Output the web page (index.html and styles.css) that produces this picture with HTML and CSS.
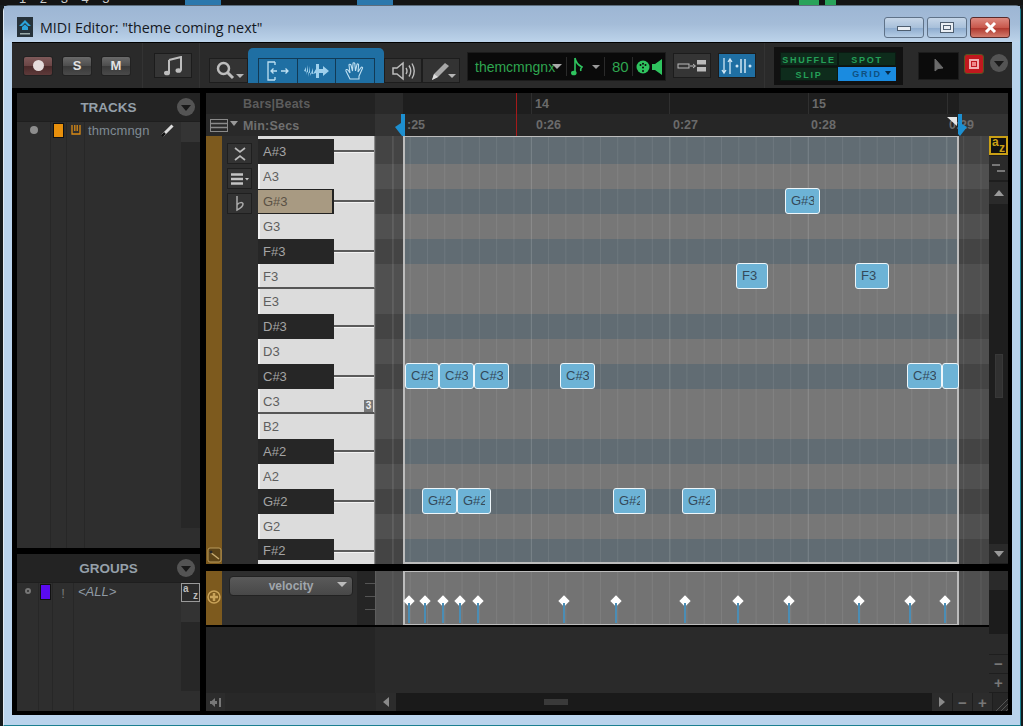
FILE: index.html
```html
<!DOCTYPE html>
<html lang="en">
<head>
  <meta charset="UTF-8">
  <title>MIDI Editor</title>
  <link rel="stylesheet" href="styles.css">
</head>
<body>
  <div class="behind">
    <span class="behind-nums">1 2 3 4 5</span>
    <i class="bl b1"></i><i class="bl b2"></i><i class="gr g1"></i><i class="gr g2"></i>
  </div>

  <div class="window">
    <div class="titlebar">
      <svg class="app-icon" width="16" height="20" viewBox="0 0 16 20"><rect width="16" height="20" fill="#26323a"/><path d="M8 3 14 9 11 9 8 6 5 9 2 9Z" fill="#2aa3dc"/><path d="M5 10 8 7.500 11 10 11 13 5 13Z" fill="#2aa3dc"/><rect x="3" y="16" width="10" height="1.500" fill="#9aa"/></svg>
      <span class="title">MIDI Editor: "theme coming next"</span>
      <div class="win-btns">
        <div class="win-btn"><i class="ic-min"></i></div>
        <div class="win-btn"><i class="ic-max"></i></div>
        <div class="win-btn close"><svg width="13" height="11" viewBox="0 0 13 11"><path d="M2 1 11 10M11 1 2 10" stroke="#fff" stroke-width="3"/></svg></div>
      </div>
    </div>

    <div class="client">
      <div class="toolbar">
        <div class="tb-sec sec-rec">
          <div class="tb-chip rec"><i></i></div>
          <div class="tb-chip">S</div>
          <div class="tb-chip">M</div>
        </div>
        <div class="tb-sec sec-note">
          <div class="tb-btn big">
            <svg width="20" height="20" viewBox="0 0 20 20"><path d="M6 4 18 1V14.500M6 4V17" stroke="#bdbdbd" stroke-width="2" fill="none"/><ellipse cx="4" cy="17" rx="3" ry="2.300" fill="#bdbdbd"/><ellipse cx="15.500" cy="14.500" rx="3" ry="2.300" fill="#bdbdbd"/></svg>
          </div>
        </div>
        <div class="tb-sec sec-tools">
          <div class="tool-btn">
            <svg width="22" height="20" viewBox="0 0 22 20"><circle cx="7.500" cy="7.500" r="5.500" stroke="#bdbdbd" stroke-width="2.500" fill="none"/><path d="M11.500 11.500 17 17" stroke="#bdbdbd" stroke-width="3"/></svg>
            <i class="mini-arrow"></i>
          </div>
          <div class="blue-tab">
            <div class="blue-cell">
              <svg width="24" height="20" viewBox="0 0 24 20"><path d="M9 1H2V19H9M9 1V4M9 16V19" stroke="#bfe0f2" stroke-width="1.300" fill="none"/><path d="M11 10H5M7.500 7.500 5 10 7.500 12.500M15 10H22M19.500 7.500 22 10 19.500 12.500" stroke="#bfe0f2" stroke-width="1.300" fill="none"/></svg>
            </div>
            <div class="blue-cell">
              <svg width="28" height="20" viewBox="0 0 28 20"><path d="M1 10 3 6V14L5 4V16L7 5V15L10 7 10 13 13 8V3H16V8L20 8V5L26 10 20 15V12L16 12V17H13V12L10 13Z" fill="#9fd0ec"/></svg>
            </div>
            <div class="blue-cell">
              <svg width="22" height="20" viewBox="0 0 22 20"><path d="M6 18 2 10C1.500 8.500 3 8 4 9L6 12 5 4C5 3 6.500 3 7 4L8.500 10 9 2.500C9 1.500 10.500 1.500 10.800 2.500L11.500 10 13 3.500C13.300 2.500 14.800 2.800 14.600 4L14 11 17 6.500C17.600 5.600 19 6.300 18.500 7.300L15 15 15 18Z" stroke="#bfe0f2" stroke-width="1.100" fill="none"/></svg>
            </div>
          </div>
          <div class="tool-btn narrow">
            <svg width="24" height="20" viewBox="0 0 24 20"><path d="M1 7H5L11 2V18L5 13H1Z" stroke="#bdbdbd" stroke-width="1.500" fill="none"/><path d="M14 7Q16 10 14 13M17 4.500Q20.500 10 17 15.500M20 2.500Q24.500 10 20 17.500" stroke="#bdbdbd" stroke-width="1.400" fill="none"/></svg>
          </div>
          <div class="tool-btn narrow">
            <svg width="22" height="20" viewBox="0 0 22 20"><path d="M2 19 4 13 15 2 19 5 8 16Z" fill="#a8a8a8"/><path d="M2 19 4 13 8 16Z" fill="#ddd"/></svg>
            <i class="mini-arrow"></i>
          </div>
          <div class="name-panel">
            <span class="nm">themcmngnx</span><i class="wh-arrow"></i>
            <i class="sep"></i>
            <svg class="nt" width="12" height="20" viewBox="0 0 12 20"><path d="M4 1V15M4 1Q5 7 11 10 9 12 10 14" stroke="#2fc45f" stroke-width="1.600" fill="none"/><ellipse cx="2.800" cy="16" rx="2.800" ry="2.300" fill="#2fc45f"/></svg>
            <i class="gy-arrow"></i>
            <i class="sep"></i>
            <span class="vel">80</span>
            <i class="sep tight"></i>
            <svg class="dial" width="14" height="14" viewBox="0 0 14 14"><circle cx="7" cy="7" r="6.500" fill="#2fc45f"/><circle cx="4.500" cy="5" r="1" fill="#0a0a0a"/><circle cx="9.500" cy="5" r="1" fill="#0a0a0a"/><circle cx="7" cy="3.800" r="1" fill="#0a0a0a"/><circle cx="7" cy="7.500" r="1" fill="#0a0a0a"/><circle cx="7" cy="11" r="1" fill="#0a0a0a"/></svg>
            <svg class="spk" width="11" height="16" viewBox="0 0 11 16"><path d="M0 5H3L10 0V16L3 11H0Z" fill="#2fc45f"/></svg>
          </div>
          <div class="tb-btn wide">
            <svg width="30" height="14" viewBox="0 0 30 14"><rect x="1" y="5" width="11" height="4" fill="none" stroke="#bbb"/><path d="M13 7H18M16 5 18.500 7 16 9" stroke="#bbb" fill="none"/><rect x="20" y="1" width="9" height="4.500" fill="#bbb"/><rect x="20" y="8" width="9" height="4.500" fill="#bbb"/></svg>
          </div>
          <div class="tb-btn wide active">
            <svg width="32" height="18" viewBox="0 0 32 18"><path d="M3 1V16M1 13 3 16 5 13M9 17V2M7 5 9 2 11 5" stroke="#cfe6f4" stroke-width="1.300" fill="none"/><circle cx="16" cy="9" r="1.500" fill="#cfe6f4"/><path d="M20 2V16M24 2V16" stroke="#cfe6f4" stroke-width="1.500"/><circle cx="29" cy="9" r="1.500" fill="#cfe6f4"/></svg>
          </div>
        </div>
        <div class="tb-sec sec-mode">
          <div class="mode-grid">
            <div class="mode">SHUFFLE</div>
            <div class="mode">SPOT</div>
            <div class="mode">SLIP</div>
            <div class="mode on">GRID<i class="grid-arrow"></i></div>
          </div>
          <div class="cursor-box">
            <svg width="10" height="16" viewBox="0 0 10 16"><path d="M1 1V13L4 10.500 9 10Z" fill="#6a6a6a" stroke="#6a6a6a"/></svg>
          </div>
          <div class="red-btn"><i></i></div>
          <div class="circle-drop"><i></i></div>
        </div>
      </div>

      <div class="work">
        <div class="side">
          <div class="panel tracks">
            <div class="panel-head"><span>TRACKS</span><div class="circle-drop"><i></i></div></div>
            <div class="panel-body">
              <div class="pcol c-dot"><i class="dot"></i></div>
              <div class="pcol c-clr"><i class="clr"></i></div>
              <div class="pcol c-typ">
                <svg width="10" height="10" viewBox="0 0 10 10"><path d="M1 0V9H9V0M3.800 0V6M6.200 0V6" stroke="#d98a16" stroke-width="1.300" fill="none"/></svg>
              </div>
              <div class="pcol c-name">
                <span>thmcmngn</span>
                <svg width="14" height="14" viewBox="0 0 14 14"><path d="M1.500 12.500 11.500 2.500" stroke="#ddd" stroke-width="3"/><path d="M1 13 4 10" stroke="#111" stroke-width="2.500"/></svg>
              </div>
              <div class="pscroll"><i class="ps-top"></i><i class="ps-fill"></i><i class="ps-end"></i></div>
            </div>
          </div>
          <div class="panel groups">
            <div class="panel-head"><span>GROUPS</span><div class="circle-drop"><i></i></div></div>
            <div class="panel-body">
              <div class="pcol c-dot"><i class="ring"></i></div>
              <div class="pcol c-clr"><i class="clr purple"></i></div>
              <div class="pcol c-typ bang">!</div>
              <div class="pcol c-name all"><em>&lt;ALL&gt;</em></div>
              <div class="pscroll">
                <div class="az"><b>a</b><b>z</b></div>
                <i class="ps-top short"></i><i class="ps-fill"></i><i class="ps-end"></i>
              </div>
            </div>
          </div>
        </div>

        <div class="main">
          <div class="ruler">
            <div class="ruler-labels">
              <div class="rl-top">Bars|Beats</div>
              <div class="rl-bot">
                <svg width="18" height="13" viewBox="0 0 18 13"><rect x=".5" y=".5" width="17" height="12" fill="none" stroke="#8a8a8a"/><path d="M1 4.500H17M1 8.500H17" stroke="#8a8a8a" stroke-width="1.500"/></svg>
                <i class="rl-arrow"></i>
                <span>Min:Secs</span>
              </div>
            </div>
            <div class="timeline">
              <div class="tl-top"></div>
              <div class="tl-bot"></div>
              <i class="bar-tick" style="left:156px"></i>
              <i class="bar-tick" style="left:294px"></i>
              <i class="bar-tick" style="left:433px"></i>
              <i class="bar-tick" style="left:572px"></i>
              <span class="bar-num" style="left:160px">14</span>
              <span class="bar-num" style="left:437px">15</span>
              <span class="sec" style="left:32px">:25</span>
              <span class="sec" style="left:161px">0:26</span>
              <span class="sec" style="left:298px">0:27</span>
              <span class="sec" style="left:436px">0:28</span>
              <span class="sec" style="left:574px">0:29</span>
              <i class="play-line"></i>
              <svg class="flag flag-l" width="10" height="22" viewBox="0 0 10 22"><path d="M6 0H10V22H7L0 13 6 9Z" fill="#1d8fd0"/></svg>
              <svg class="flag flag-w" width="10" height="9" viewBox="0 0 10 9"><path d="M0 0H10V9Z" fill="#e6e6e6"/></svg>
              <svg class="flag flag-r" width="11" height="22" viewBox="0 0 11 22"><path d="M0 0H4V10L9 13 2 22 0 20Z" fill="#1d8fd0"/></svg>
            </div>
          </div>

          <div class="roll">
            <div class="rail">
              <svg class="rail-ic" width="15" height="16" viewBox="0 0 15 16"><rect x="1" y="1" width="13" height="14" rx="2" fill="#5d4417" stroke="#b99a5c"/><path d="M3 5 12 12" stroke="#c9ad72" stroke-width="1.500"/><circle cx="4" cy="5" r="1.500" fill="#2a2a2a"/></svg>
            </div>
            <div class="roll-tools">
              <div class="rt-btn"><svg width="14" height="14" viewBox="0 0 14 14"><path d="M2 1 7 5 12 1M2 13 7 9 12 13" stroke="#bbb" stroke-width="1.700" fill="none"/></svg></div>
              <div class="rt-btn"><svg width="18" height="12" viewBox="0 0 18 12"><path d="M0 1.500H12M0 6H12M0 10.500H12" stroke="#c4c4c4" stroke-width="2.500"/><path d="M14 5H18L16 7.500Z" fill="#c4c4c4"/></svg></div>
              <div class="rt-btn"><svg width="10" height="16" viewBox="0 0 10 16"><path d="M2 0V14C6 12 8 10 8 8 8 6 4 6 2 9" stroke="#aaa" stroke-width="1.500" fill="none"/></svg></div>
            </div>
            <div class="keys">
              <div class="key-top"></div>
              <div class="key sharp"><span class="blk">A#3</span></div>
              <div class="key">A3</div>
              <div class="key sharp"><span class="blk sel">G#3</span></div>
              <div class="key">G3</div>
              <div class="key sharp"><span class="blk">F#3</span></div>
              <div class="key seam">F3</div>
              <div class="key">E3</div>
              <div class="key sharp"><span class="blk">D#3</span></div>
              <div class="key">D3</div>
              <div class="key sharp"><span class="blk">C#3</span></div>
              <div class="key seam">C3<b class="oct">3</b></div>
              <div class="key">B2</div>
              <div class="key sharp"><span class="blk">A#2</span></div>
              <div class="key">A2</div>
              <div class="key sharp"><span class="blk">G#2</span></div>
              <div class="key">G2</div>
              <div class="key sharp"><span class="blk short">F#2</span></div>
            </div>
            <div class="lanes">
              <div class="row blue top-sliver"></div>
              <div class="row blue"></div>
              <div class="row"></div>
              <div class="row blue"><div class="note" style="left:410px;width:35px"><span>G#3</span></div></div>
              <div class="row"></div>
              <div class="row blue"></div>
              <div class="row">
                <div class="note" style="left:361px;width:32px"><span>F3</span></div>
                <div class="note" style="left:480px;width:34px"><span>F3</span></div>
              </div>
              <div class="row"></div>
              <div class="row blue"></div>
              <div class="row"></div>
              <div class="row blue">
                <div class="note" style="left:30px;width:34px"><span>C#3</span></div>
                <div class="note" style="left:64px;width:35px"><span>C#3</span></div>
                <div class="note" style="left:99px;width:35px"><span>C#3</span></div>
                <div class="note" style="left:185px;width:35px"><span>C#3</span></div>
                <div class="note" style="left:532px;width:35px"><span>C#3</span></div>
                <div class="note" style="left:567px;width:17px"></div>
              </div>
              <div class="row"></div>
              <div class="row"></div>
              <div class="row blue"></div>
              <div class="row"></div>
              <div class="row blue">
                <div class="note" style="left:47px;width:35px"><span>G#2</span></div>
                <div class="note" style="left:82px;width:34px"><span>G#2</span></div>
                <div class="note" style="left:238px;width:33px"><span>G#2</span></div>
                <div class="note" style="left:307px;width:34px"><span>G#2</span></div>
              </div>
              <div class="row"></div>
              <div class="row blue"></div>
            </div>
            <div class="vscroll">
              <div class="az yellow"><b>a</b><b>z</b></div>
              <div class="vs-btn lines"><i></i><i></i></div>
              <div class="vs-btn"><i class="up"></i></div>
              <div class="vs-track"><i class="thumb"></i></div>
              <div class="vs-btn end"><i class="down"></i></div>
            </div>
          </div>

          <div class="lower">
            <div class="lower-main">
              <div class="lane-row">
                <div class="rail">
                  <svg class="rail-plus" width="14" height="14" viewBox="0 0 14 14"><circle cx="7" cy="7" r="6" fill="none" stroke="#c9a35a" stroke-width="1.500"/><path d="M7 3V11M3 7H11" stroke="#c9a35a" stroke-width="2.500"/></svg>
                </div>
                <div class="lane-ctl">
                  <div class="drop">velocity<i class="wh-arrow"></i></div>
                </div>
                <div class="lane-scale"><i></i><i></i><i></i></div>
                <div class="lane">
                  <div class="pin" style="left:34px"></div>
                  <div class="pin" style="left:50px"></div>
                  <div class="pin" style="left:68px"></div>
                  <div class="pin" style="left:85px"></div>
                  <div class="pin" style="left:103px"></div>
                  <div class="pin" style="left:189px"></div>
                  <div class="pin" style="left:241px"></div>
                  <div class="pin" style="left:310px"></div>
                  <div class="pin" style="left:363px"></div>
                  <div class="pin" style="left:414px"></div>
                  <div class="pin" style="left:484px"></div>
                  <div class="pin" style="left:535px"></div>
                  <div class="pin" style="left:570px"></div>
                </div>
              </div>
              <div class="empty"><div class="empty-l"></div><div class="empty-r"></div></div>
            </div>
            <div class="lower-scroll">
              <i class="ls-a"></i><i class="ls-b"></i><i class="ls-c"></i>
              <div class="sq">&minus;</div>
              <div class="sq">+</div>
            </div>
          </div>

          <div class="hscroll">
            <div class="hs-btn first"><svg width="12" height="9" viewBox="0 0 12 9"><path d="M5 0V3H0V6H5V9L0 4.500Z" fill="#777"/><path d="M0 4.500H7" stroke="#777" stroke-width="3"/><path d="M10 0V9" stroke="#777" stroke-width="2"/></svg></div>
            <div class="hs-fill"></div>
            <div class="hs-btn"><i class="left"></i></div>
            <div class="hs-track"><i class="hthumb"></i></div>
            <div class="hs-btn"><i class="right"></i></div>
            <div class="hs-btn sign">&minus;</div>
            <div class="hs-btn sign">+</div>
            <div class="hs-end"><svg width="14" height="14" viewBox="0 0 14 14"><path d="M2 14 14 2M7 14 14 7M12 14 14 12" stroke="#555"/></svg></div>
          </div>
        </div>
      </div>
    </div>
  </div>
</body>
</html>
```

FILE: styles.css
```css
* { box-sizing: border-box; }
html, body { margin: 0; padding: 0; height: 726px; overflow: hidden; }
body { background: #161a1c; font-family: "Liberation Sans", Arial, sans-serif; color: #9a9a9a; }
i { display: block; }

/* whatever is peeking out behind the window */
.behind { height: 5px; overflow: hidden; position: relative; background: #141414; }
.behind-nums { display: block; margin: -9px 0 0 19px; color: #ccc; font-size: 13px; word-spacing: 10px; }
.bl, .gr { position: absolute; top: 0; height: 5px; }
.bl { background: #2c78ad; width: 36px; }
.b1 { left: 185px; }
.b2 { left: 357px; }
.gr { background: #29a35a; }
.g1 { left: 799px; width: 20px; }
.g2 { left: 825px; width: 11px; }

.window {
  width: 1018px; height: 721px; margin-left: 3px;
  background: #b9d3ec;
  border: 1px solid #dfe9f3; border-right-color: #1c7f90; border-bottom-color: #1c7f90; border-top-color: #5d6d7d;
  border-radius: 6px 6px 0 0;
  padding: 0 8px 10px 8px;
  display: flex; flex-direction: column;
}

.titlebar { height: 36px; flex: none; display: flex; align-items: center; background: linear-gradient(#9db6d4, #a4bcd8 50%, #bcd3ea); margin: 0 -8px; padding: 6px 9px 0 13px; }
.app-icon { flex: none; }
.title { margin-left: 7px; font: 14.3px "Open Sans", sans-serif; color: #14181f; }
.win-btns { margin-left: auto; display: flex; gap: 3px; padding-right: 1px; }
.win-btn { width: 40px; height: 21px; border: 1px solid #5f7288; border-radius: 3px; background: linear-gradient(#c6d6e8, #a8c0da 50%, #8fadcf 55%, #b6cde5); display: flex; align-items: center; justify-content: center; }
.win-btn.close { background: linear-gradient(#dd8a80, #c8584c 50%, #b03a30 55%, #d27a6c); border-color: #5a2a2a; }
.ic-min { width: 14px; height: 5px; background: #e9eef4; border: 1px solid #4e5e70; margin-top: 3px; }
.ic-max { width: 14px; height: 11px; border: 1px solid #4e5e70; background: #e9eef4; box-shadow: inset 0 0 0 2px #e9eef4, inset 0 0 0 3px #4e5e70; }

.client { flex: 1; background: #000; display: flex; flex-direction: column; border-top: 1px solid #000; min-height: 0; }

/* toolbar */
.toolbar { height: 45px; flex: none; display: flex; background: #2a2a2a; }
.tb-sec { height: 100%; display: flex; align-items: center; border-right: 1px solid #333; }
.sec-rec { width: 131px; padding-left: 12px; gap: 11px; }
.sec-note { width: 57px; padding-left: 11px; }
.sec-tools { width: 565px; padding-left: 9px; }
.sec-mode { flex: 1; padding-left: 9px; border-right: 0; }
.tb-chip { width: 28px; height: 18px; border-radius: 2px; background: linear-gradient(#6a6a6a, #4d4d4d 50%, #3a3a3a 52%, #4a4a4a); color: #e2e2e2; font-weight: bold; font-size: 13px; text-align: center; line-height: 18px; box-shadow: 0 0 0 1px #222; }
.tb-chip.rec { background: linear-gradient(#7f5a5a, #6b4545 50%, #4a2a2a 52%, #5e3a3a); display: flex; align-items: center; justify-content: center; }
.tb-chip.rec i { width: 11px; height: 11px; border-radius: 50%; background: #e5dcdc; }
.tb-btn { height: 25px; background: #353535; border: 1px solid #1c1c1c; display: flex; align-items: center; justify-content: center; }
.tb-btn.big { width: 38px; }
.tb-btn.wide { width: 38px; }
.tb-btn.active { background: #1f6fa3; margin-left: 7px; }

.tool-btn { width: 39px; height: 25px; margin-top: 15px; align-self: flex-start; background: #333; border: 1px solid #1d1d1d; display: flex; align-items: center; padding-left: 6px; position: relative; }
.tool-btn.narrow { width: 38px; padding-left: 7px; }
.mini-arrow { position: absolute; right: 3px; bottom: 4px; border: 4px solid transparent; border-top: 4px solid #b5b5b5; border-bottom: 0; }
.blue-tab { width: 136px; height: 35px; margin-top: 5px; align-self: flex-start; background: #1f6fa3; border-radius: 5px 5px 0 0; padding: 10px 9px 0 10px; display: flex; }
.blue-cell { flex: 1; height: 25px; border: 1px solid #123a55; border-bottom: 0; margin-right: -1px; display: flex; align-items: center; justify-content: center; }
.blue-cell:last-child { margin-right: 0; }

.name-panel { width: 197px; height: 27px; margin: 2px 8px 0; background: #0a0a0a; display: flex; align-items: center; padding-left: 7px; color: #2fa650; box-shadow: 0 0 0 1px #1c1c1c; }
.nm { font-size: 14px; width: 83px; flex: none; white-space: nowrap; }
.wh-arrow { border: 5px solid transparent; border-top: 5px solid #aaa; border-bottom: 0; flex: none; }
.name-panel .wh-arrow { margin-left: -6px; }
.sep { width: 1px; height: 19px; background: #2a2a2a; margin-left: 4px; flex: none; }
.nt { margin-left: 4px; flex: none; }
.gy-arrow { border: 4px solid transparent; border-top: 4px solid #9a9a9a; border-bottom: 0; margin-left: 9px; flex: none; }
.vel { font-size: 15px; margin-left: 7px; }
.sep.tight { margin-left: 3px; }
.dial { margin-left: 3px; flex: none; }
.spk { margin-left: 2px; flex: none; }

.mode-grid { width: 129px; height: 38px; background: #111; padding: 5px 7px 4px 6px; display: grid; grid-template-columns: 58px 58px; grid-template-rows: 14px 14px; gap: 1px 0; align-self: flex-start; margin-top: 4px; }
.mode { background: #0e2c1c; color: #25a058; font-size: 9px; font-weight: bold; letter-spacing: 1.7px; text-align: center; line-height: 14px; position: relative; border: 1px solid #0a1a12; }
.mode.on { background: #1a8be0; color: #0f5080; border: 0; }
.grid-arrow { position: absolute; right: 5px; top: 4px; border: 3px solid transparent; border-top: 4px solid #062c4a; border-bottom: 0; }
.cursor-box { width: 39px; height: 26px; margin-left: 16px; background: #0b0b0b; display: flex; align-items: center; justify-content: center; box-shadow: 0 0 0 1px #1c1c1c; }
.red-btn { width: 20px; height: 20px; margin: -3px 0 0 6px; background: #c0181e; border: 1px solid #552; border-radius: 3px; display: flex; align-items: center; justify-content: center; }
.red-btn i { width: 10px; height: 10px; border: 2px solid #f0b0b0; box-shadow: inset 0 0 0 1px #c0181e; background: #e88; }
.circle-drop { width: 18px; height: 18px; border-radius: 50%; background: #545454; margin-left: 6px; display: flex; align-items: center; justify-content: center; flex: none; }
.circle-drop i { border: 5px solid transparent; border-top: 6px solid #191919; border-bottom: 0; margin-top: 1px; }
.sec-mode .circle-drop { margin-top: -5px; }

/* body of the window */
.work { flex: 1; min-height: 0; display: flex; gap: 6px; padding: 5px 4px 4px 5px; }
.side { width: 183px; display: flex; flex-direction: column; gap: 6px; flex: none; }
.panel { background: #2e2e2e; display: flex; flex-direction: column; }
.tracks { height: 455px; }
.groups { height: 157px; }
.panel-head { height: 29px; flex: none; display: flex; align-items: center; background: #232323; border-bottom: 1px solid #1e1e1e; padding-right: 5px; }
.panel-head span { flex: 1; text-align: center; font-size: 13.5px; font-weight: bold; color: #95a0aa; padding-left: 29px; }
.panel-body { flex: 1; display: flex; min-height: 0; font-size: 13px; }
.pcol { border-right: 1px solid #272727; padding-top: 2px; display: flex; justify-content: center; flex: none; }
.c-dot { width: 34px; padding-top: 4px; }
.c-clr { width: 16px; }
.c-typ { width: 18px; padding-top: 3px; }
.c-name { width: 96px; justify-content: flex-start; align-items: flex-start; padding: 1px 0 0 3px; gap: 11px; border-right: 0; }
.c-name span { color: #7f8a93; font-size: 13px; letter-spacing: .1px; }
.groups .c-dot { width: 22px; }
.groups .c-clr { width: 14px; }
.groups .c-typ { width: 21px; }
.groups .c-name { width: 107px; }
.dot { width: 8px; height: 8px; border-radius: 50%; background: #8d8d8d; margin-top: 0; }
.ring { width: 6px; height: 6px; border-radius: 50%; border: 2px solid #777; margin-top: 1px; }
.clr { width: 9px; height: 13px; background: #e8900c; box-shadow: 0 0 0 1px #111; }
.clr.purple { background: #5a0bf0; height: 14px; }
.bang { color: #777; font-size: 13px; padding-top: 3px; }
.all em { color: #8f9aa4; font-size: 13px; padding-left: 1px; }
.pscroll { width: 19px; flex: none; display: flex; flex-direction: column; background: #2b2b2b; }
.ps-top { height: 20px; background: #343434; }
.ps-top.short { height: 20px; background: #333; }
.ps-fill { flex: 1; background: #272727; }
.ps-end { height: 20px; background: #2e2e2e; }
.az { height: 19px; border: 1px solid #9a9a9a; background: #2a2a2a; flex: none; display: flex; justify-content: space-between; padding: 0 1px; font-size: 10px; line-height: 10px; color: #bbb; }
.az b:last-child { align-self: flex-end; }

.main { width: 802px; flex: none; display: flex; flex-direction: column; }

/* ruler */
.ruler { height: 43px; flex: none; display: flex; }
.ruler-labels { width: 169px; font-size: 12.500px; font-weight: bold; color: #666; letter-spacing: .2px; flex: none; }
.rl-top { height: 21px; background: #222; padding: 1px 0 0 37px; line-height: 21px; color: #5c5c5c; }
.rl-bot { height: 22px; background: #292929; display: flex; align-items: center; padding: 1px 0 0 4px; color: #6f6f6f; }
.rl-arrow { border: 4px solid transparent; border-top: 5px solid #999; border-bottom: 0; margin: -4px 0 0 2px; }
.rl-bot span { margin-left: 5px; }
.timeline { flex: 1; position: relative; font-size: 12.500px; font-weight: bold; color: #6b6b6b; overflow: hidden; }
.tl-top { height: 21px; background: linear-gradient(90deg, #2a2a2a 28px, #1e1e1e 28px, #1e1e1e 584px, #2a2a2a 584px); }
.tl-bot { height: 22px; background: linear-gradient(90deg, #333 28px, #262626 28px, #262626 584px, #333 584px); }
.bar-tick { position: absolute; top: 0; height: 21px; width: 1px; background: #2f2f2f; }
.bar-num, .sec { position: absolute; }
.bar-num { top: 4px; }
.sec { top: 25px; }
.play-line { position: absolute; left: 141px; top: 0; bottom: 0; width: 1px; background: #a51a1a; }
.flag { position: absolute; }
.flag-l { left: 20px; top: 21px; }
.flag-w { left: 572px; top: 24px; }
.flag-r { left: 583px; top: 21px; }

/* piano roll */
.roll { height: 429px; flex: none; display: flex; border-bottom: 1px solid #000; }
.rail { width: 16px; flex: none; background: #7d5a1e; position: relative; }
.rail-ic { position: absolute; left: 1px; bottom: 1px; }
.roll-tools { width: 36px; flex: none; background: #2e2e2e; padding: 7px 0 0 5px; display: flex; flex-direction: column; gap: 4px; }
.rt-btn { width: 25px; height: 21px; background: #333; border: 1px solid #1f1f1f; display: flex; align-items: center; justify-content: center; }
.keys { width: 117px; flex: none; font-size: 13px; color: #5e5e5e; }
.key-top { height: 3px; background: #dcdcdc; border-right: 1px solid #8a8a8a; }
.key { height: 25px; line-height: 25px; padding-left: 5px; background: #dcdcdc; border-right: 1px solid #8a8a8a; position: relative; box-shadow: inset 2px 0 0 #f2f2f2; }
.key.seam { border-bottom: 2px solid #555; }
.key.sharp { padding-left: 0; background: linear-gradient(#dcdcdc 0 11px, #5a5a5a 11px 13px, #f2f2f2 13px 14px, #dcdcdc 14px); box-shadow: none; }
.blk { display: block; width: 76px; height: 25px; padding-left: 5px; background: #262626; color: #a4a4a4; }
.blk.short { height: 21px; line-height: 23px; }
.blk.sel { background: #a89a82; color: #5a5145; border: 1px solid #222; border-left: 0; border-width: 1px 2px 1px 0; line-height: 23px; }
.oct { position: absolute; right: 1px; bottom: 0; width: 9px; height: 12px; background: #777; color: #eee; font-size: 10px; line-height: 12px; text-align: center; }

.lanes { width: 614px; flex: none; position: relative; --ticks: linear-gradient(90deg, rgba(255, 255, 255, .08) 1px, transparent 1px) 0.1px 0 / 17.3px 100%, linear-gradient(90deg, rgba(255, 255, 255, .09) 1px, transparent 1px) 17.5px 0 / 138.5px 100%; }
.lanes::after { content: ""; box-sizing: border-box; position: absolute; left: 28px; top: 0; width: 556px; height: 428px; border: 2px solid #bcbcbc; border-width: 1px 2px 2px 2px; }
.row { height: 25px; position: relative; background: var(--ticks), linear-gradient(90deg, #505050 29px, #777 29px, #777 584px, #505050 584px); }
.row.blue { background: var(--ticks), linear-gradient(90deg, #444 29px, #616c73 29px, #616c73 584px, #444 584px); }
.row.top-sliver { height: 3px; }
.note { position: absolute; top: -1px; height: 26px; background: #6db3d6; border: 1px solid #eef6fa; border-radius: 3px; color: #34495a; font-size: 13px; line-height: 24px; z-index: 1; }
.note span { display: block; overflow: hidden; white-space: nowrap; margin: 0 5px; }

.vscroll { flex: 1; background: #1e1e1e; display: flex; flex-direction: column; }
.az.yellow { border: 2px solid #caa015; background: #111; color: #caa015; font-size: 12px; line-height: 9px; height: 19px; }
.vs-btn { height: 22px; background: #2a2a2a; display: flex; align-items: center; justify-content: center; flex: none; margin-top: 2px; }
.vs-btn.lines { height: 24px; margin-top: 1px; flex-direction: column; gap: 4px; }
.vs-btn.lines i { width: 8px; height: 2px; background: #777; }
.vs-btn.lines i:first-child { margin-left: -5px; }
.vs-btn.lines i:last-child { margin-left: 5px; }
.vs-btn .up { border: 5px solid transparent; border-bottom: 6px solid #999; border-top: 0; }
.vs-btn .down { border: 5px solid transparent; border-top: 6px solid #999; border-bottom: 0; }
.vs-btn.end { height: 19px; margin: 0 0 1px; }
.vs-track { flex: 1; padding: 150px 0 0 6px; }
.thumb { width: 8px; height: 44px; background: #313131; border: 1px solid #383838; }

/* velocity lane and what is under it */
.lower { height: 122px; flex: none; margin-top: 6px; display: flex; }
.lower-main { width: 783px; flex: none; display: flex; flex-direction: column; }
.lane-row { height: 56px; flex: none; display: flex; }
.lane-row .rail { height: 54px; }
.rail-plus { position: absolute; left: 1px; top: 19px; }
.lane-ctl { width: 135px; height: 54px; flex: none; background: #2e2e2e; padding: 5px 4px 0 7px; }
.drop { height: 20px; background: linear-gradient(#5a5a5a, #484848); border: 1px solid #222; border-radius: 4px; text-align: center; font-size: 12px; font-weight: bold; color: #a0a6ac; line-height: 18px; position: relative; }
.drop .wh-arrow { position: absolute; right: 5px; top: 5px; border-top-color: #bbb; }
.lane-scale { width: 18px; height: 54px; flex: none; background: #252525; padding: 12px 0 0 8px; display: flex; flex-direction: column; gap: 12px; }
.lane-scale i { width: 10px; height: 1px; background: #555; }
.lane { flex: 1; height: 56px; position: relative; border-bottom: 2px solid #000; background: linear-gradient(90deg, rgba(255, 255, 255, .08) 1px, transparent 1px) 0.1px 0 / 17.3px 100%, linear-gradient(90deg, #505050 29px, #737373 29px, #737373 584px, #505050 584px); }
.lane::after { content: ""; box-sizing: border-box; position: absolute; left: 28px; top: 0; width: 556px; height: 54px; border: 2px solid #bcbcbc; border-width: 1px 2px 1px 2px; }
.pin { position: absolute; top: 26px; width: 1px; height: 26px; z-index: 1; }
.pin::before { content: ""; position: absolute; left: -4px; top: 0; width: 8px; height: 8px; background: #fff; transform: rotate(45deg); }
.pin::after { content: ""; position: absolute; left: -1px; top: 6px; width: 2px; height: 20px; background: #4a8db5; }
.empty { flex: 1; display: flex; }
.empty-l { width: 169px; background: #252525; }
.empty-r { flex: 1; background: #2a2a2a; }
.lower-scroll { flex: 1; background: #1e1e1e; display: flex; flex-direction: column; }
.lower-scroll i { flex: none; }
.ls-a { height: 19px; background: #2a2a2a; }
.ls-b { height: 44px; background: #1c1c1c; }
.ls-c { height: 20px; background: #2a2a2a; }
.sq { height: 18px; margin-top: 1px; background: #2a2a2a; color: #777; font-size: 15px; font-weight: bold; text-align: center; line-height: 17px; }

.hscroll { height: 18px; flex: none; display: flex; background: #1e1e1e; }
.hs-btn { width: 20px; flex: none; background: #2c2c2c; display: flex; align-items: center; justify-content: center; color: #777; font-size: 15px; font-weight: bold; }
.hs-btn.first { width: 19px; }
.hs-btn.sign { width: 19px; margin-left: 1px; }
.hs-fill { width: 151px; flex: none; background: #282828; }
.hs-track { width: 536px; flex: none; padding: 6px 0 0 148px; background: #1a1a1a; }
.hthumb { width: 24px; height: 6px; background: #3a3a3a; }
.left { border: 5px solid transparent; border-right: 6px solid #8a8a8a; border-left: 0; }
.right { border: 5px solid transparent; border-left: 6px solid #8a8a8a; border-right: 0; }
.hs-end { flex: 1; background: #262626; margin-left: 1px; display: flex; align-items: flex-end; justify-content: flex-end; }
```
